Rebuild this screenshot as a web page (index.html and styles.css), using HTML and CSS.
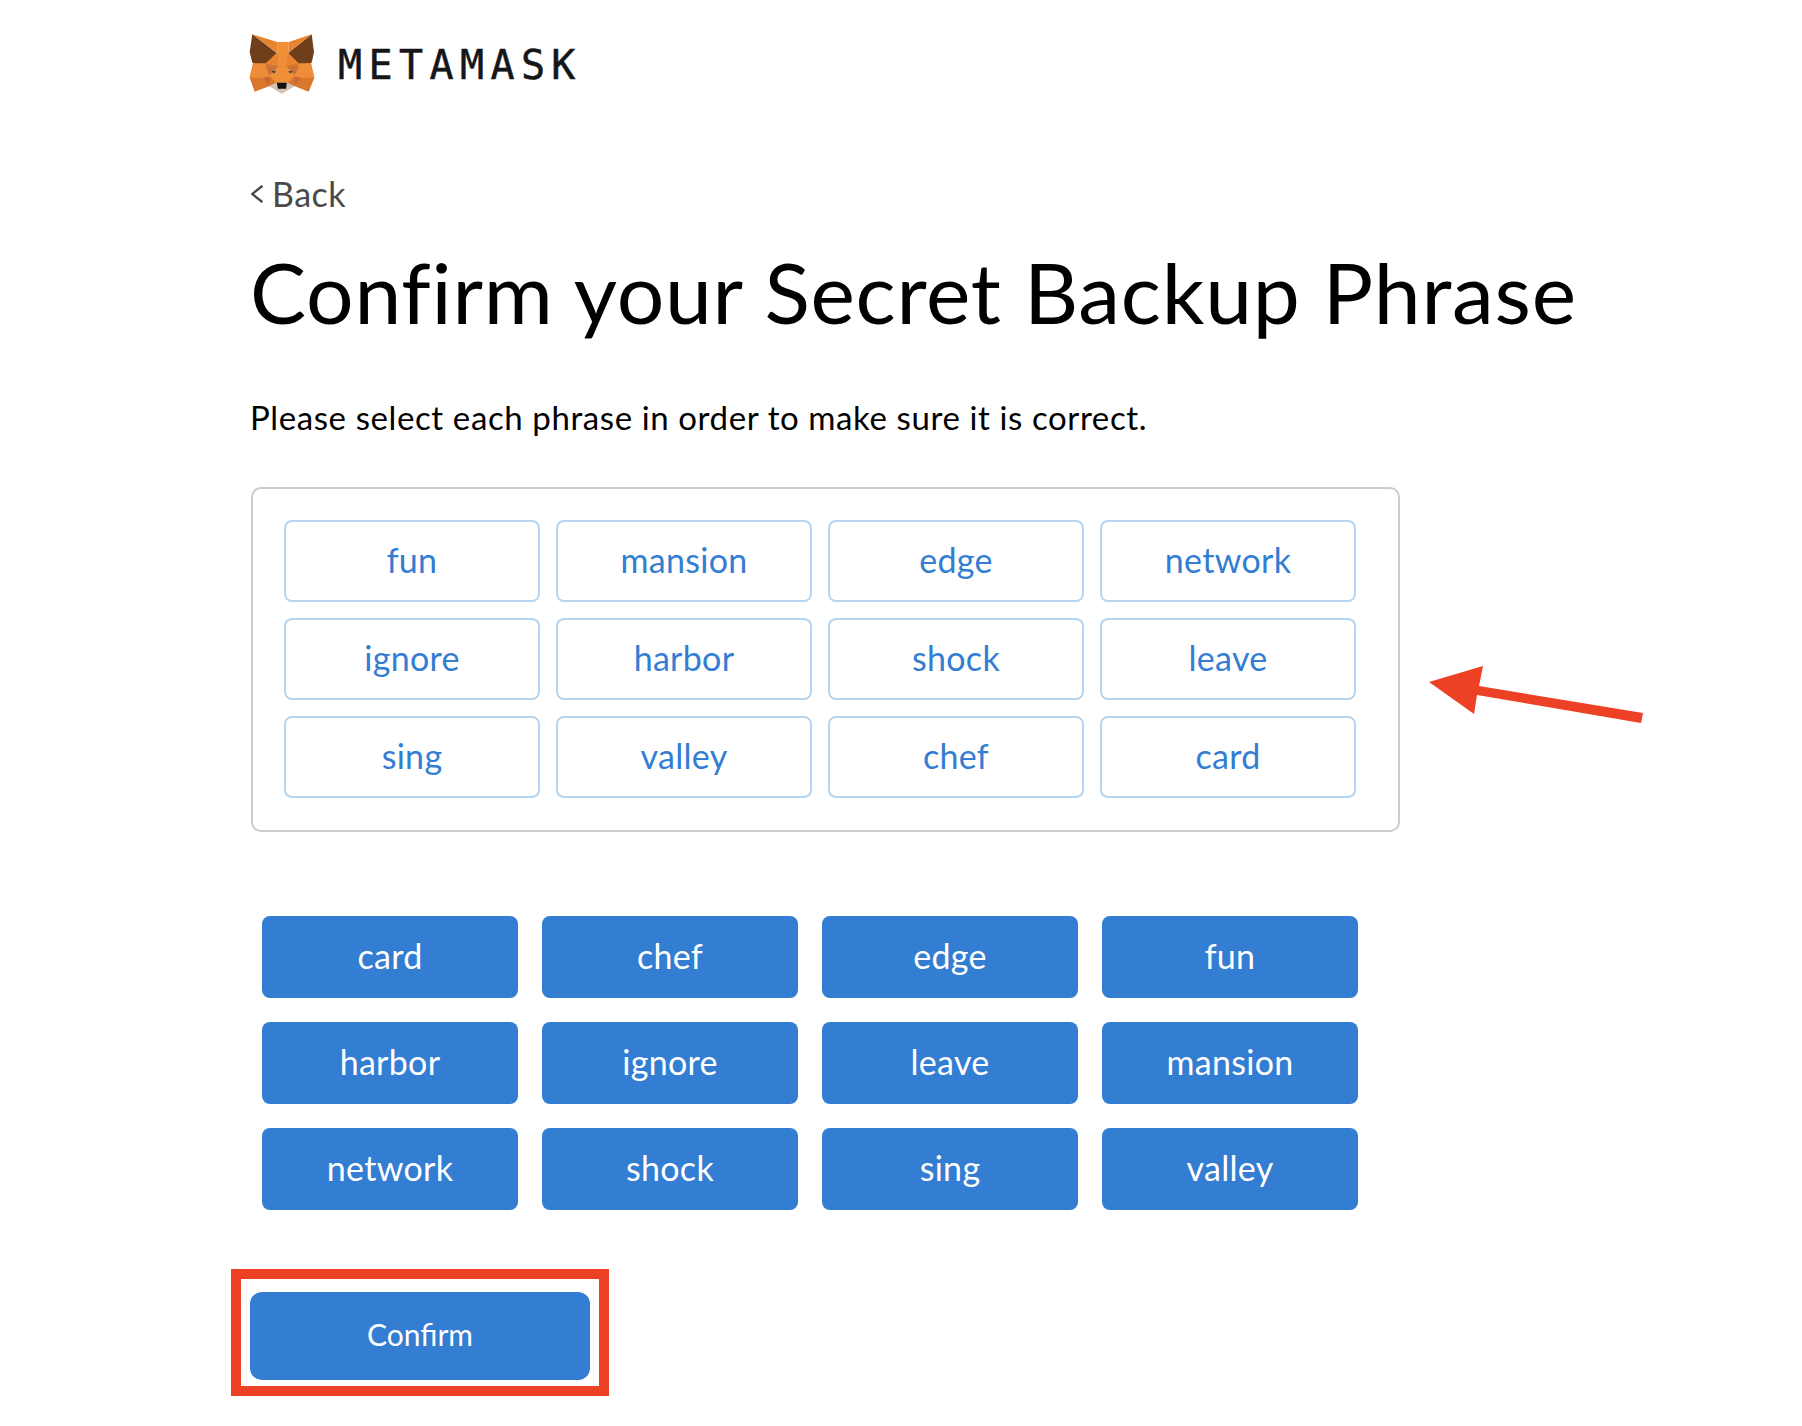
FILE: index.html
```html
<!DOCTYPE html>
<html>
<head>
    <meta charset="UTF-8">
    <title>Confirm your Secret Backup Phrase</title>
    <link rel="stylesheet" href="styles.css">
</head>
<body>
    <div class="page">
        <div class="brand">
            <svg class="fox" viewBox="55 65 205 190" width="68" height="63">
                <polygon fill="#d9772c" points="60,203 72,150 108,155 143,128 176,128 208,155 243,150 255,203 238,245 195,228 157,250 120,228 75,245"/>
                <polygon fill="#6f3f1c" points="68,72 142,128 108,160 68,158 60,125"/>
                <polygon fill="#6f3f1c" points="247,72 176,128 208,160 247,158 254,125"/>
                <polygon fill="#e8842e" points="68,72 143,95 143,128"/>
                <polygon fill="#e8842e" points="247,72 178,95 176,128"/>
                <polygon fill="#ef8f38" points="143,95 178,95 176,128 172,168 146,168 143,128"/>
                <polygon fill="#e8842e" points="143,128 108,160 146,168"/>
                <polygon fill="#e8842e" points="176,128 208,160 172,168"/>
                <polygon fill="#ee8c38" points="60,203 72,160 108,160 120,200 100,203"/>
                <polygon fill="#ee8c38" points="255,203 243,160 208,160 195,200 215,203"/>
                <polygon fill="#c9713a" points="108,168 146,168 138,192 118,192"/>
                <polygon fill="#c9713a" points="208,168 172,168 180,192 198,192"/>
                <polygon fill="#ef8f38" points="120,196 146,168 172,168 195,196 175,218 140,218"/>
                <polygon fill="#c8693a" points="100,203 120,200 120,228"/>
                <polygon fill="#c8693a" points="215,203 195,200 195,228"/>
                <polygon fill="#d3c2b5" points="120,228 140,218 175,218 195,228 157,252"/>
                <polygon fill="#111111" points="142,218 172,218 170,236 145,236"/>
                <polygon fill="#2b3f5c" points="126,182 140,184 132,190"/>
                <polygon fill="#2b3f5c" points="190,182 176,184 184,190"/>
            </svg>
            <span class="brand-name">METAMASK</span>
        </div>

        <a class="back" href="#">
            <svg class="back-icon" viewBox="0 0 12 18" width="12" height="18">
                <polyline points="11.5,0.8 1.2,9 11.5,17.2" fill="none" stroke="#4a4a4a" stroke-width="2.4"/>
            </svg>
            Back
        </a>

        <h1>Confirm your Secret Backup Phrase</h1>
        <p class="intro">Please select each phrase in order to make sure it is correct.</p>

        <div class="phrase-box">
            <button class="slot">fun</button>
            <button class="slot">mansion</button>
            <button class="slot">edge</button>
            <button class="slot">network</button>
            <button class="slot">ignore</button>
            <button class="slot">harbor</button>
            <button class="slot">shock</button>
            <button class="slot">leave</button>
            <button class="slot">sing</button>
            <button class="slot">valley</button>
            <button class="slot">chef</button>
            <button class="slot">card</button>
        </div>

        <div class="word-grid">
            <button class="word">card</button>
            <button class="word">chef</button>
            <button class="word">edge</button>
            <button class="word">fun</button>
            <button class="word">harbor</button>
            <button class="word">ignore</button>
            <button class="word">leave</button>
            <button class="word">mansion</button>
            <button class="word">network</button>
            <button class="word">shock</button>
            <button class="word">sing</button>
            <button class="word">valley</button>
        </div>

        <div class="highlight">
            <button class="confirm">Confirm</button>
        </div>
    </div>

    <svg class="arrow" viewBox="0 0 230 70" width="230" height="70">
        <polygon fill="#ec4124" points="9,22 63,6 59,26 223,53 221,63 57,35 54,54"/>
    </svg>
</body>
</html>
```
FILE: styles.css
```css
* {
    box-sizing: border-box;
}

body {
    margin: 0;
    background-color: white;
    font-family: Lato, "Open Sans", sans-serif;
    font-variant-ligatures: none;
}

.page {
    padding: 32px 0 30px 251px;
}

.brand {
    display: flex;
    align-items: center;
    height: 63px;
    margin-left: -3px;
}

.fox {
    display: block;
}

.brand-name {
    margin: 2px 0 0 22px;
    font-family: "DejaVu Sans Mono", monospace;
    font-size: 40px;
    letter-spacing: 6.4px;
    -webkit-text-stroke: 0.5px #141618;
    color: #141618;
}

.back {
    display: flex;
    align-items: center;
    gap: 9px;
    margin-top: 79px;
    font-size: 34px;
    letter-spacing: 0.5px;
    line-height: 40px;
    color: #4a4a4a;
    text-decoration: none;
}

h1 {
    margin: 28px 0 0 -1px;
    font-size: 84px;
    font-weight: 400;
    letter-spacing: 0.75px;
    line-height: 100px;
    color: #000;
}

.intro {
    margin: 55px 0 0 -1px;
    font-size: 33px;
    letter-spacing: 0.6px;
    line-height: 40px;
    color: #000;
}

.phrase-box {
    display: grid;
    grid-template-columns: repeat(4, 256px);
    grid-auto-rows: 82px;
    gap: 16px;
    width: 1149px;
    height: 345px;
    margin-top: 50px;
    padding: 31px;
    border: 2px solid #ccc;
    border-radius: 10px;
}

.slot {
    padding: 0 0 4px;
    background-color: white;
    border: 2px solid #b5d5f0;
    border-radius: 8px;
    font-family: inherit;
    font-size: 34px;
    letter-spacing: 0.3px;
    color: #337dd2;
}

.word-grid {
    display: grid;
    grid-template-columns: repeat(4, 256px);
    grid-auto-rows: 82px;
    gap: 24px;
    margin: 84px 0 0 11px;
}

.word {
    padding: 0 0 4px;
    background-color: #337dd2;
    border: none;
    border-radius: 8px;
    font-family: inherit;
    font-size: 34px;
    letter-spacing: 0.3px;
    color: white;
}

.highlight {
    width: 378px;
    margin: 59px 0 0 -20px;
    padding: 13px 9px 6px;
    border: 10px solid #ec4124;
}

.confirm {
    display: block;
    width: 340px;
    height: 88px;
    padding: 0 0 5px;
    background-color: #337dd2;
    border: none;
    border-radius: 12px;
    font-family: inherit;
    font-size: 30px;
    color: white;
}

/* annotation drawn over the screenshot */
.arrow {
    position: absolute;
    left: 1420px;
    top: 660px;
}
```
